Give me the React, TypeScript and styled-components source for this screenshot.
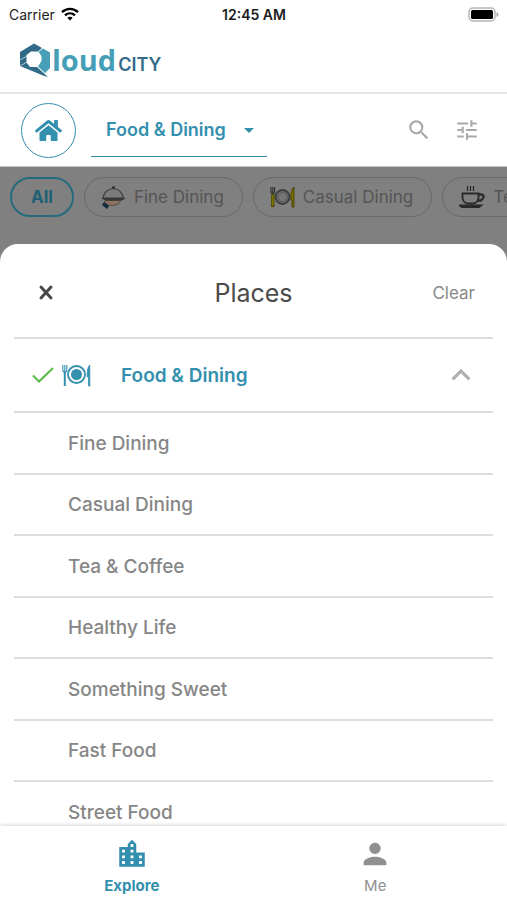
import React from 'react';
import styled, { createGlobalStyle } from 'styled-components';
import { FaHome } from 'react-icons/fa';
import { MdSearch, MdTune, MdArrowDropDown, MdKeyboardArrowUp, MdLocationCity, MdPerson } from 'react-icons/md';

const teal = '#338fae';
const line = '#dcdcdc';

const Global = createGlobalStyle`
  * { box-sizing: border-box; }
  body { margin: 0; font-family: Inter, "Liberation Sans", sans-serif; background: #fff; }
  svg { display: block; flex: none; }
`;

const Screen = styled.div`
  height: 100vh;
  display: flex;
  flex-direction: column;
  overflow: hidden;
  background: #fff;
`;

const BaseButton = styled.button`
  margin: 0;
  padding: 0;
  border: 0;
  background: none;
  font: inherit;
  cursor: pointer;
`;

const StatusBar = styled.div`
  flex: none;
  height: 28px;
  padding: 0 8px 0 9px;
  display: grid;
  grid-template-columns: 1fr auto 1fr;
  align-items: center;
  font-size: 14px;
  color: #1c1c1c;
`;

const Carrier = styled.span`
  display: flex;
  align-items: center;
  gap: 6px;
`;

const Clock = styled.span`
  font-weight: 600;
`;

const BatterySlot = styled.span`
  justify-self: end;
`;

const BrandBar = styled.header`
  flex: none;
  height: 66px;
  padding: 0 19px;
  display: flex;
  align-items: center;
  border-bottom: 2px solid #e6e6e6;
`;

const Brand = styled.a`
  display: flex;
  align-items: center;
  text-decoration: none;
  color: #479fb7;
`;

const BrandText = styled.span`
  padding-top: 5px;
  font: 700 29px/40px "Open Sans", sans-serif;
`;

const BrandSub = styled.span`
  margin-left: 2px;
  font: 600 18px/40px Inter, sans-serif;
  color: #316b87;
`;

const Toolbar = styled.div`
  flex: none;
  height: 73px;
  padding: 0 27px 0 21px;
  display: flex;
  align-items: center;
  border-bottom: 1px solid #c4c4c4;
`;

const HomeButton = styled(BaseButton)`
  width: 55px;
  height: 55px;
  border: 1px solid ${teal};
  border-radius: 50%;
  display: flex;
  align-items: center;
  justify-content: center;
  color: ${teal};
`;

const CategoryButton = styled(BaseButton)`
  width: 176px;
  height: 54px;
  margin-left: 15px;
  padding: 0 6px 0 15px;
  display: flex;
  align-items: center;
  justify-content: space-between;
  border-bottom: 1px solid ${teal};
  color: ${teal};
  font-size: 18px;
  font-weight: 600;
`;

const Tools = styled.div`
  margin-left: auto;
  display: flex;
  gap: 22px;
`;

const IconButton = styled(BaseButton)`
  color: #aaa;
`;

const Stage = styled.main`
  flex: 1;
  min-height: 0;
  display: flex;
  flex-direction: column;
  background: #808080;
`;

const Chips = styled.div`
  flex: none;
  height: 77px;
  padding: 10px 0 0 10px;
  display: flex;
  align-items: flex-start;
  gap: 10px;
  overflow: hidden;
`;

const Chip = styled(BaseButton)<{ $active?: boolean }>`
  flex: none;
  height: 40px;
  padding: ${p => (p.$active ? '0 19px' : '0 18px 0 16px')};
  border: ${p => (p.$active ? '2px solid #256b7e' : '1px solid #6a6a6a')};
  border-radius: 20px;
  display: flex;
  align-items: center;
  gap: 8px;
  font-size: 17px;
  font-weight: ${p => (p.$active ? 700 : 400)};
  color: ${p => (p.$active ? '#1d6074' : '#555')};
`;

const Sheet = styled.section`
  flex: 1;
  min-height: 0;
  overflow: hidden;
  padding: 0 14px;
  border-radius: 18px 18px 0 0;
  background: #fff;
`;

const SheetHeader = styled.div`
  height: 95px;
  padding: 4px 18px 0;
  display: grid;
  grid-template-columns: 1fr auto 1fr;
  align-items: center;
  border-bottom: 2px solid ${line};
`;

const CloseButton = styled(BaseButton)`
  justify-self: start;
  padding: 6px;
`;

const Title = styled.h1`
  margin: 0;
  font-size: 25px;
  line-height: 32px;
  font-weight: 400;
  color: #4b4b4b;
`;

const ClearButton = styled(BaseButton)`
  justify-self: end;
  font-size: 17px;
  color: #888;
`;

const GroupButton = styled(BaseButton)`
  width: 100%;
  height: 74px;
  padding: 0 13px 0 18px;
  display: flex;
  align-items: center;
  border-bottom: 2px solid ${line};
  color: ${teal};
`;

const PlateSlot = styled.span`
  margin-left: 8px;
`;

const GroupName = styled.span`
  margin-left: 30px;
  font-size: 19px;
  font-weight: 600;
`;

const Chevron = styled(MdKeyboardArrowUp)`
  margin-left: auto;
  color: #b0b0b0;
`;

const Options = styled.ul`
  margin: 0;
  padding: 0;
  list-style: none;
  display: grid;
  grid-auto-rows: 62px 61px;
`;

const Option = styled.li`
  display: flex;
  border-bottom: 2px solid ${line};
`;

const OptionButton = styled(BaseButton)`
  flex: 1;
  padding-left: 54px;
  text-align: left;
  font-size: 19px;
  font-weight: 500;
  color: #868686;
`;

const TabBar = styled.nav`
  flex: none;
  position: relative;
  height: 74px;
  padding: 0 10px;
  display: grid;
  grid-template-columns: 1fr 1fr;
  background: #fff;
  box-shadow: 0 -1px 4px rgba(0, 0, 0, 0.16);
`;

const Tab = styled(BaseButton)<{ $active?: boolean }>`
  padding-top: 11px;
  display: flex;
  flex-direction: column;
  align-items: center;
  gap: 5px;
  font-size: 15px;
  line-height: 20px;
  font-weight: ${p => (p.$active ? 700 : 400)};
  color: ${p => (p.$active ? teal : '#909090')};
`;

const Wifi = () => (
  <svg width="18" height="14" viewBox="0 0 18 14" fill="none" stroke="#000" strokeWidth="2.4">
    <path d="M1 5.2C5.6.8 12.400.8 17 5.200" />
    <path d="M4 8.400C6.900 5.700 11.100 5.700 14 8.400" />
    <path d="M9 13.400 6.300 10.700Q9 8.700 11.700 10.700Z" fill="#000" stroke="none" />
  </svg>
);

const Battery = () => (
  <svg width="31" height="15" viewBox="0 0 31 15">
    <rect x="1" y="1" width="26" height="13" rx="4" fill="#fff" stroke="#b5b5b5" strokeWidth="1.500" />
    <rect x="3" y="3" width="22" height="9" rx="1.500" fill="#000" />
    <path d="M28.500 5v5Q30.500 9 30.500 7.500T28.500 5Z" fill="#a5a5a5" />
  </svg>
);

const LogoMark = () => (
  <svg width="33" height="35" viewBox="0 0 33 35" aria-label="Q">
    <path d="M15 .5 23 5 19 8.500H12L7.500 12V19.500L11 24H18L29 34 24 32.500 1 23V9Z" fill="#316b87" />
    <path d="M24 5.500 31 9.500V25L26 30 19 23.500 22.500 18V13L19.500 9Z" fill="#479fb7" />
    <path d="M1 17 8 13M8 19 1 23" stroke="#fff" strokeWidth=".6" />
  </svg>
);

const Cloche = () => (
  <svg width="25" height="24" viewBox="0 0 25 24">
    <path d="M5 15.500H20Q18 20 12 20.500L7 20 3 17Z" fill="#8a7362" stroke="#4b423c" strokeWidth=".8" />
    <path d="M2 13C3 6 7 4 12.500 3.500 18 4 21 7 22.500 13Z" fill="#7c7c7c" stroke="#3a3a3a" strokeWidth="1.200" />
    <circle cx="12.500" cy="2.500" r="1.500" fill="#333" />
    <path d="M0 13H25L21 15.500H4Z" fill="#3a3633" />
    <path d="m3 17 5 4-2 3-5-4Z" fill="#122e3e" />
  </svg>
);

const CasualPlate = () => (
  <svg width="25" height="22" viewBox="0 0 25 22" fill="none">
    <circle cx="12.500" cy="11" r="7" fill="#6c6c6c" stroke="#3f3f3f" strokeWidth="1.800" />
    <circle cx="12.500" cy="11" r="4.500" fill="#757575" stroke="#5c5c5c" />
    <path d="M1 1v6h3.500V1M2.800 1v8" stroke="#333" strokeWidth="1.200" />
    <path d="M2.800 8v13" stroke="#4a4700" strokeWidth="3.400" />
    <path d="M2.800 9v11" stroke="#777000" strokeWidth="2" />
    <path d="M24 1v20h-2v-7h-1Q20 4 24 1Z" fill="#777000" stroke="#3c3900" strokeWidth=".8" />
  </svg>
);

const Cup = () => (
  <svg width="26" height="24" viewBox="0 0 26 24" fill="none" stroke="#292929" strokeWidth="1.800">
    <path d="M8.500 1v5M11.500 1v5M14.500 1v5" strokeWidth="1.300" />
    <path d="M3.500 8.500h16v4Q19 18 14 18.500H9Q4 18 3.500 12.500Z" />
    <path d="M19.500 9.500h3.500Q25 10 24.500 12T22 15.500H18.500" strokeWidth="2.300" />
    <path d="M1 20.500h21l-2 1.500H3Z" fill="#292929" />
  </svg>
);

const Cross = () => (
  <svg width="16" height="17" viewBox="0 0 16 17" fill="none" stroke="#484848" strokeWidth="3" strokeLinecap="round">
    <path d="m3 3 10 11m0-11-10 11" />
  </svg>
);

const Check = () => (
  <svg width="22" height="17" viewBox="0 0 22 17" fill="none" stroke="#58b947" strokeWidth="2">
    <path d="m1 8.500 6 6L21 1" />
  </svg>
);

const DiningPlate = () => (
  <svg width="29" height="23" viewBox="0 0 29 23" fill="none" stroke={teal}>
    <circle cx="14.500" cy="10.500" r="8.500" strokeWidth="1.800" />
    <circle cx="14.500" cy="10.500" r="5.500" fill={teal} stroke="none" />
    <path d="M.8 1v5q0 2 2 2T4.800 6V1M2.800 1v6" strokeWidth="1.100" />
    <path d="M2.800 7v15" strokeWidth="2" />
    <path d="M27.800 1v21h-1.300v-9h-1.300Q25 3 27.800 1Z" fill={teal} strokeWidth=".8" />
  </svg>
);

const options = ['Fine Dining', 'Casual Dining', 'Tea & Coffee', 'Healthy Life', 'Something Sweet', 'Fast Food', 'Street Food'];

export default function App() {
  return (
    <Screen>
      <Global />
      <StatusBar>
        <Carrier>Carrier <Wifi /></Carrier>
        <Clock>12:45 AM</Clock>
        <BatterySlot><Battery /></BatterySlot>
      </StatusBar>
      <BrandBar>
        <Brand href="#">
          <LogoMark />
          <BrandText>loud<BrandSub>CITY</BrandSub></BrandText>
        </Brand>
      </BrandBar>
      <Toolbar>
        <HomeButton aria-label="Home"><FaHome size={27} /></HomeButton>
        <CategoryButton>Food &amp; Dining <MdArrowDropDown size={24} /></CategoryButton>
        <Tools>
          <IconButton aria-label="Search"><MdSearch size={26} /></IconButton>
          <IconButton aria-label="Filters"><MdTune size={26} /></IconButton>
        </Tools>
      </Toolbar>
      <Stage>
        <Chips>
          <Chip $active>All</Chip>
          <Chip><Cloche />Fine Dining</Chip>
          <Chip><CasualPlate />Casual Dining</Chip>
          <Chip><Cup />Tea &amp; Coffee</Chip>
        </Chips>
        <Sheet>
          <SheetHeader>
            <CloseButton aria-label="Close"><Cross /></CloseButton>
            <Title>Places</Title>
            <ClearButton>Clear</ClearButton>
          </SheetHeader>
          <GroupButton aria-expanded="true">
            <Check />
            <PlateSlot><DiningPlate /></PlateSlot>
            <GroupName>Food &amp; Dining</GroupName>
            <Chevron size={38} />
          </GroupButton>
          <Options>
            {options.map(name => (
              <Option key={name}><OptionButton>{name}</OptionButton></Option>
            ))}
          </Options>
        </Sheet>
      </Stage>
      <TabBar>
        <Tab $active><MdLocationCity size={34} />Explore</Tab>
        <Tab><MdPerson size={34} />Me</Tab>
      </TabBar>
    </Screen>
  );
}
